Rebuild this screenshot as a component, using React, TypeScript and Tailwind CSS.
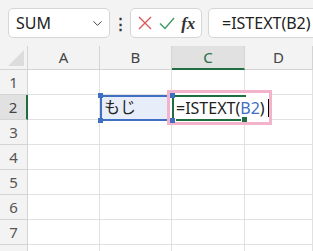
import React from 'react';
import { ChevronDown } from 'lucide-react';

const COLS = [
  { name: 'A', w: 72 },
  { name: 'B', w: 72 },
  { name: 'C', w: 73 },
  { name: 'D', w: 68 },
];

const ROWS = [1, 2, 3, 4, 5, 6, 7, 8];

const font = { fontFamily: '"Noto Sans", "Noto Sans CJK JP", sans-serif' };

export default function App() {
  return (
    <div className="w-[313px] h-[251px] overflow-hidden bg-[#f3f3f3] relative" style={font}>
      {/* Formula bar */}
      <div className="h-[46px] flex items-start pt-[8px] pl-[8px]">
        <div className="shrink-0 w-[102px] h-[30px] bg-white border border-[#d6d6d6] rounded-[5px] flex items-center pl-[7px] pr-[4px]">
          <span className="text-[16px] text-[#222] flex-1 leading-none">SUM</span>
          <ChevronDown size={15} strokeWidth={1.6} className="text-[#444]" />
        </div>
        <div className="shrink-0 w-[20px] h-[30px] flex items-center justify-center text-[#333] text-[15px] font-bold leading-none">⋮</div>
        <div className="shrink-0 w-[72px] h-[30px] bg-white border border-[#d6d6d6] rounded-[5px] flex items-center justify-around px-[3px]">
          <svg width="16" height="16" viewBox="0 0 16 16">
            <path d="M2 2 L14 14 M14 2 L2 14" stroke="#d65a5a" strokeWidth="1.4" fill="none" />
          </svg>
          <svg width="18" height="16" viewBox="0 0 18 16">
            <path d="M2 8.5 L7 13.5 L16 3" stroke="#3f9a62" strokeWidth="1.4" fill="none" />
          </svg>
          <span className="text-[17px] italic font-bold text-[#333] leading-none" style={{ fontFamily: '"Liberation Serif", serif' }}>
            fx
          </span>
        </div>
        <div className="shrink-0 ml-[6px] w-[120px] h-[30px] bg-white border border-[#d6d6d6] rounded-l-[5px] flex items-center pl-[13px]">
          <span className="text-[16px] text-[#222] leading-none whitespace-nowrap">=ISTEXT(B2)</span>
        </div>
      </div>

      {/* Sheet */}
      <div className="flex flex-col">
        {/* Column headers */}
        <div className="flex h-[24px]">
          <div className="shrink-0 w-[28px] h-full border-r border-b border-[#d4d4d4] bg-[#f3f3f3] relative">
            <div className="absolute right-[3px] bottom-[3px] w-0 h-0 border-l-[16px] border-l-transparent border-b-[16px] border-b-[#dcdcdc]" />
          </div>
          {COLS.map((c) => (
            <div
              key={c.name}
              style={{ width: c.w }}
              className={
                c.name === 'C'
                  ? 'shrink-0 h-full flex items-center justify-center border-r border-[#d4d4d4] bg-[#e1e1e1] border-b-2 border-b-[#1e6e42] text-[#1e6e42] text-[15px]'
                  : 'shrink-0 h-full flex items-center justify-center border-r border-b border-[#d4d4d4] bg-[#f3f3f3] text-[#444] text-[15px]'
              }
            >
              {c.name}
            </div>
          ))}
        </div>

        {ROWS.map((r) => (
          <div key={r} className="flex h-[25px]">
            <div
              className={
                r === 2
                  ? 'shrink-0 w-[28px] h-full flex items-center justify-center bg-[#e1e1e1] border-b border-[#d4d4d4] border-r-2 border-r-[#1e6e42] text-[#444] text-[15px]'
                  : 'shrink-0 w-[28px] h-full flex items-center justify-center bg-[#f3f3f3] border-b border-r border-[#d4d4d4] text-[#555] text-[15px]'
              }
            >
              {r < 8 ? r : null}
            </div>
            {COLS.map((c) => (
              <div
                key={c.name}
                style={{ width: c.w }}
                className={
                  r === 2 && c.name === 'B'
                    ? 'shrink-0 h-full bg-[#e8eef9] border-r border-b border-[#e1e1e1] flex items-center pl-[4px] text-[16px] text-[#222]'
                    : 'shrink-0 h-full bg-white border-r border-b border-[#e1e1e1]'
                }
              >
                {r === 2 && c.name === 'B' ? 'もじ' : null}
              </div>
            ))}
          </div>
        ))}
      </div>

      {/* B2 reference highlight */}
      <div className="absolute left-[100px] top-[95px] w-[73px] h-[26px] border-2 border-[#3f6ec2] pointer-events-none" />
      {/* Editing cell C2 with pink highlight */}
      <div className="absolute left-[167px] top-[90px] w-[105px] h-[35px] border-[3px] border-[#f3b3cb] bg-white">
        <div className="absolute left-[2px] top-[2px] w-[74px] h-[2px] bg-[#1e6e42]" />
        <div className="absolute left-[2px] top-[2px] w-[2px] h-[25px] bg-[#1e6e42]" />
        <div className="absolute left-[6px] top-[26px] w-[65px] h-[2px] bg-[#1e6e42]" />
        <div className="absolute left-[72px] top-[24px] w-[5px] h-[5px] bg-[#1e6e42]" />
        <div className="absolute left-[6px] top-[3px] h-[23px] flex items-center text-[16px] text-[#222] whitespace-nowrap leading-none">
          <span>=ISTEXT(</span>
          <span className="text-[#3f6ec2]">B2</span>
          <span>)</span>
          <span className="ml-[3px] w-[1px] h-[18px] bg-black" />
        </div>
      </div>
      {/* B2 corner handles */}
      <div className="absolute left-[98px] top-[93px] w-[5px] h-[5px] bg-[#3f6ec2]" />
      <div className="absolute left-[98px] top-[118px] w-[5px] h-[5px] bg-[#3f6ec2]" />
      <div className="absolute left-[170px] top-[93px] w-[5px] h-[5px] bg-[#3f6ec2]" />
      <div className="absolute left-[170px] top-[118px] w-[5px] h-[5px] bg-[#3f6ec2]" />
    </div>
  );
}
